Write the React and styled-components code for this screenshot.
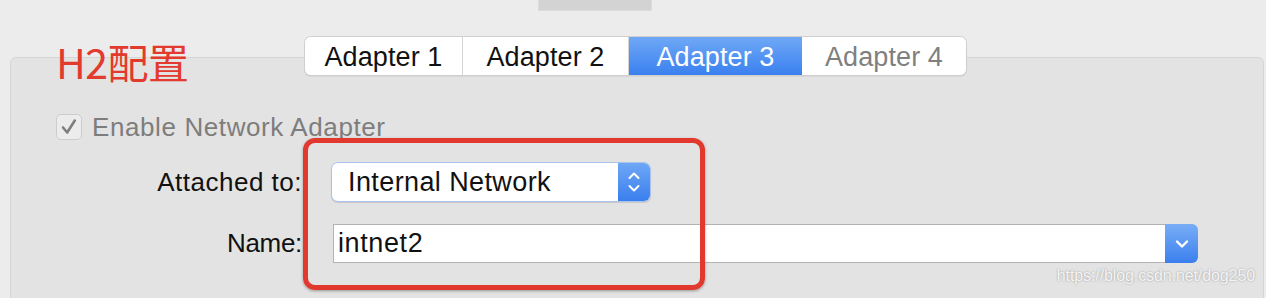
import React from "react";
import styled, { createGlobalStyle } from "styled-components";

const GlobalStyle = createGlobalStyle`
  html, body {
    margin: 0;
    padding: 0;
    background: #ececec;
  }
  body {
    font-family: "Liberation Sans", Arial, sans-serif;
  }
`;

const tabs = ["Adapter 1", "Adapter 2", "Adapter 3", "Adapter 4"];
const tabWidths = [158, 166, 173, 164];

const App = () => {
  return (
    <Page>
      <GlobalStyle />
      <TopStrip>
        <ToolbarTab />
      </TopStrip>

      <TabBar>
        <Segmented>
          {tabs.map((t, i) => (
            <Segment
              key={t}
              $active={i === 2}
              $dim={i === 3}
              $last={i === tabs.length - 1}
              style={{ width: tabWidths[i] }}
            >
              {t}
            </Segment>
          ))}
        </Segmented>
      </TabBar>

      <Panel>
        <CheckRow>
          <CheckBox>
            <svg width="20" height="20" viewBox="0 0 20 20">
              <path
                d="M4 10.5 L8.2 15.5 L15.8 3.5"
                fill="none"
                stroke="#7e7e7e"
                strokeWidth="2.6"
                strokeLinecap="round"
                strokeLinejoin="round"
              />
            </svg>
          </CheckBox>
          <CheckLabel>Enable Network Adapter</CheckLabel>
        </CheckRow>

        <Form>
          <Label>Attached to:</Label>
          <PopUp>
            <PopUpText>Internal Network</PopUpText>
            <Stepper>
              <svg width="14" height="26" viewBox="0 0 14 26">
                <path
                  d="M2.5 9 L7 4.5 L11.5 9"
                  fill="none"
                  stroke="#fff"
                  strokeWidth="2"
                  strokeLinecap="round"
                  strokeLinejoin="round"
                />
                <path
                  d="M2.5 17 L7 21.5 L11.5 17"
                  fill="none"
                  stroke="#fff"
                  strokeWidth="2"
                  strokeLinecap="round"
                  strokeLinejoin="round"
                />
              </svg>
            </Stepper>
          </PopUp>

          <Label $tight>Name:</Label>
          <Combo>
            <ComboField>intnet2</ComboField>
            <ComboButton>
              <svg width="16" height="12" viewBox="0 0 16 12">
                <path
                  d="M3 3.5 L8 8.5 L13 3.5"
                  fill="none"
                  stroke="#fff"
                  strokeWidth="2.4"
                  strokeLinecap="round"
                  strokeLinejoin="round"
                />
              </svg>
            </ComboButton>
          </Combo>
        </Form>
      </Panel>

      <Title>H2配置</Title>
      <Highlight />
      <Watermark>https://blog.csdn.net/dog250</Watermark>
    </Page>
  );
};

export default App;

const Page = styled.div`
  position: relative;
  width: 1266px;
  height: 298px;
  overflow: hidden;
  background: #ececec;
`;

const TopStrip = styled.div`
  height: 11px;
  padding-left: 538px;
  display: flex;
`;

const ToolbarTab = styled.div`
  width: 114px;
  height: 11px;
  background: #d3d3d3;
  border: 1px solid #dcdcdc;
  border-top: none;
  box-sizing: border-box;
`;

const TabBar = styled.div`
  position: relative;
  z-index: 2;
  margin-top: 26px;
  padding-left: 305px;
  display: flex;
`;

const Segmented = styled.div`
  display: flex;
  height: 38px;
  border-radius: 6px;
  background: #fff;
  box-shadow: 0 0 0 1px #cfcfcf, 0 1px 1.5px rgba(0, 0, 0, 0.25);
  overflow: hidden;
`;

const Segment = styled.div`
  display: flex;
  align-items: center;
  justify-content: center;
  padding-top: 2px;
  box-sizing: border-box;
  font-size: 27px;
  letter-spacing: 0.1px;
  color: ${(p) => (p.$active ? "#fff" : p.$dim ? "#7f7f7f" : "#111")};
  background: ${(p) =>
    p.$active ? "linear-gradient(#6fa8f6, #3a80ef)" : "#fff"};
  border-right: ${(p) => (p.$last || p.$active ? "none" : "1px solid #d4d4d4")};
`;

const Panel = styled.div`
  margin: -18px 2px 0 10px;
  height: 260px;
  background: #e3e3e3;
  border: 1px solid #d5d5d5;
  border-radius: 6px;
  padding: 56px 0 0 45px;
  box-sizing: border-box;
`;

const CheckRow = styled.div`
  display: flex;
  align-items: center;
  gap: 10px;
  height: 26px;
`;

const CheckBox = styled.div`
  width: 26px;
  height: 26px;
  box-sizing: border-box;
  border: 1px solid #cdcdcd;
  border-radius: 5px;
  background: #ececec;
  display: flex;
  align-items: center;
  justify-content: center;
`;

const CheckLabel = styled.span`
  font-size: 26px;
  color: #7d7d7d;
  letter-spacing: 0.6px;
`;

const Form = styled.div`
  display: grid;
  grid-template-columns: 246px 1fr;
  column-gap: 29px;
  row-gap: 22px;
  align-items: center;
  margin-top: 22px;
`;

const Label = styled.div`
  text-align: right;
  font-size: 26px;
  color: #111;
  letter-spacing: ${(p) => (p.$tight ? "-0.3px" : "0.5px")};
`;

const PopUp = styled.div`
  display: flex;
  width: 320px;
  height: 40px;
  box-sizing: border-box;
  border-radius: 7px;
  background: #fff;
  border: 1px solid #a9c3ec;
  box-shadow: 0 1px 1px rgba(0, 0, 0, 0.12);
  overflow: hidden;
`;

const PopUpText = styled.div`
  flex: 1;
  display: flex;
  align-items: center;
  padding-left: 16px;
  font-size: 27px;
  color: #111;
  letter-spacing: 0.4px;
`;

const Stepper = styled.div`
  width: 32px;
  display: flex;
  align-items: center;
  justify-content: center;
  background: linear-gradient(#6ea7f6, #3a7fee);
`;

const Combo = styled.div`
  display: flex;
  margin-left: 2px;
  width: 865px;
  height: 39px;
`;

const ComboField = styled.div`
  flex: 1;
  display: flex;
  align-items: center;
  padding-left: 4px;
  background: #fff;
  border: 1px solid #b3b3b3;
  border-right: none;
  font-size: 27px;
  color: #111;
  letter-spacing: 0.6px;
`;

const ComboButton = styled.div`
  width: 33px;
  display: flex;
  align-items: center;
  justify-content: center;
  border-radius: 0 6px 6px 0;
  background: linear-gradient(#79aef6, #3b7fee);
`;

const Title = styled.div`
  position: absolute;
  z-index: 3;
  left: 56px;
  top: 33px;
  font-family: "Noto Sans CJK SC", "Liberation Sans", sans-serif;
  font-size: 41px;
  font-weight: 400;
  line-height: 56px;
  letter-spacing: -0.5px;
  color: #e23a2d;
`;

const Highlight = styled.div`
  position: absolute;
  z-index: 3;
  left: 303px;
  top: 138px;
  width: 402px;
  height: 152px;
  box-sizing: border-box;
  border: 5px solid #e1392d;
  border-radius: 12px;
  box-shadow: 0 1px 3px rgba(0, 0, 0, 0.35);
`;

const Watermark = styled.div`
  position: absolute;
  z-index: 3;
  right: 11px;
  top: 267px;
  font-size: 16px;
  letter-spacing: -0.1px;
  color: #f4f4f4;
  text-shadow: 0 0 2px rgba(0, 0, 0, 0.35);
`;
